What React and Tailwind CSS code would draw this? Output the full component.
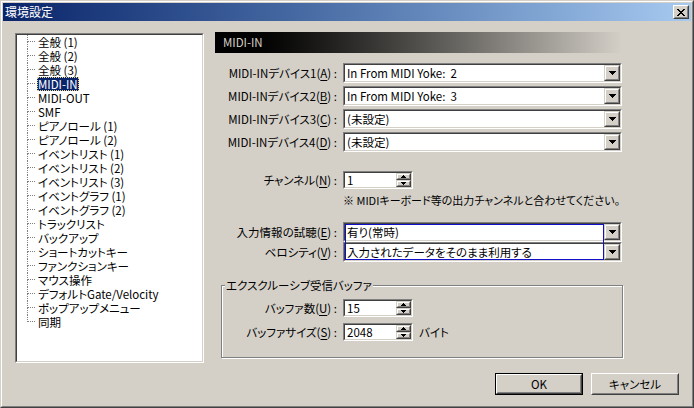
import React from 'react';

const FONT = "font-['Noto_Sans_CJK_JP','Noto_Sans_CJK_SC',sans-serif] [font-feature-settings:'palt']";

// classic 3D frames
const Raised = ({ children, className = '', button = false }) => (
    <div
        className={`border ${button
            ? 'border-t-white border-l-white'
            : 'border-t-[#d4d0c8] border-l-[#d4d0c8]'} border-b-[#404040] border-r-[#404040] ${className}`}
    >
        <div
            className={`flex h-full w-full items-center justify-center border ${button
                ? 'border-t-[#d4d0c8] border-l-[#d4d0c8]'
                : 'border-t-white border-l-white'} border-b-[#808080] border-r-[#808080] bg-[#d4d0c8]`}
        >
            {children}
        </div>
    </div>
);

const Sunken = ({ children, className = '' }) => (
    <div className={`border border-t-[#808080] border-l-[#808080] border-b-white border-r-white ${className}`}>
        <div className="flex h-full w-full border border-t-[#404040] border-l-[#404040] border-b-[#d4d0c8] border-r-[#d4d0c8] bg-white">
            {children}
        </div>
    </div>
);

const DownTri = () => (
    <svg width="7" height="4" viewBox="0 0 7 4" shapeRendering="crispEdges">
        <path d="M0 0h7v1h-1v1h-1v1h-1v1h-1v-1h-1v-1h-1v-1h-1z" fill="#000" />
    </svg>
);

const SmallTri = ({ up }) => (
    <svg width="5" height="3" viewBox="0 0 5 3" shapeRendering="crispEdges">
        {up
            ? <path d="M2 0h1v1h1v1h1v1h-5v-1h1v-1h1z" fill="#000" />
            : <path d="M0 0h5v1h-1v1h-1v1h-1v-1h-1v-1h-1z" fill="#000" />}
    </svg>
);

const Combo = ({ value }) => (
    <Sunken className="h-[20px] w-[279px]">
        <div className="flex-1 whitespace-pre pl-[2px] leading-[16px]">{value}</div>
        <Raised className="h-[16px] w-[16px]"><DownTri /></Raised>
    </Sunken>
);

const Spinner = ({ value }) => (
    <Sunken className="h-[18px] w-[70px]">
        <div className="flex-1 pl-[2px] leading-[14px]">{value}</div>
        <div className="flex w-[15px] flex-col">
            <Raised className="h-[7px] w-full"><SmallTri up /></Raised>
            <Raised className="h-[7px] w-full"><SmallTri /></Raised>
        </div>
    </Sunken>
);

const Label = ({ text, hot, width = 'w-[128px]' }) => (
    <div className={`${width} shrink-0 whitespace-nowrap pr-[6px] text-right leading-[14px]`}>
        {text}(<span className="underline underline-offset-2">{hot}</span>) :
    </div>
);

const TREE_ITEMS = [
    '全般 (1)', '全般 (2)', '全般 (3)', 'MIDI-IN', 'MIDI-OUT', 'SMF',
    'ピアノロール (1)', 'ピアノロール (2)',
    'イベントリスト (1)', 'イベントリスト (2)', 'イベントリスト (3)',
    'イベントグラフ (1)', 'イベントグラフ (2)',
    'トラックリスト', 'バックアップ', 'ショートカットキー', 'ファンクションキー',
    'マウス操作', 'デフォルトGate/Velocity', 'ポップアップメニュー', '同期'
];

const Tree = () => (
    <Sunken className="mt-px h-[330px] w-[189px] shrink-0">
        <div className="flex flex-col pl-[10px]">
            {TREE_ITEMS.map((item, idx) => {
                const last = idx === TREE_ITEMS.length - 1;
                const selected = item === 'MIDI-IN';
                return (
                    <div key={item} className="flex h-[14px] items-center">
                        <div className="flex h-[14px] w-[8px] shrink-0 flex-col">
                            <div className="h-[7px] border-b border-l border-dotted border-[#808080]" />
                            {!last && <div className="h-[7px] border-l border-dotted border-[#808080]" />}
                        </div>
                        <span
                            className={`ml-[2px] inline-block h-[14px] whitespace-nowrap border border-dotted leading-[12px] ${selected
                                ? 'border-[#e8d890] bg-[#0a246a] text-white'
                                : 'border-transparent'}`}
                        >
                            {item}
                        </span>
                    </div>
                );
            })}
        </div>
    </Sunken>
);

const MidiInPanel = () => (
    <div className="w-[408px]">
        <div className="h-[21px] w-[407px] bg-linear-to-r from-[#000000] to-[#d4d0c8] pl-[8px] leading-[21px] text-[#d4d0c8]">
            MIDI-IN
        </div>

        <div className="mt-[10px] flex flex-col gap-[3px]">
            {[
                ['1', 'A', 'In From MIDI Yoke:  2'],
                ['2', 'B', 'In From MIDI Yoke:  3'],
                ['3', 'C', '(未設定)'],
                ['4', 'D', '(未設定)']
            ].map(([n, hot, value]) => (
                <div key={n} className="flex items-center">
                    <Label text={`MIDI-INデバイス${n}`} hot={hot} />
                    <Combo value={value} />
                </div>
            ))}
        </div>

        <div className="mt-[19px] flex items-center">
            <Label text="チャンネル" hot="N" />
            <Spinner value="1" />
        </div>
        <div className="mt-[4px] whitespace-nowrap pl-[128px] text-[11px] leading-[14px]">
            ※ MIDIキーボード等の出力チャンネルと合わせてください。
        </div>

        <div className="relative mt-[15px] flex flex-col">
            <div className="flex items-center">
                <Label text="入力情報の試聴" hot="E" />
                <Combo value="有り(常時)" />
            </div>
            <div className="flex items-center">
                <Label text="ベロシティ" hot="V" />
                <Combo value="入力されたデータをそのまま利用する" />
            </div>
            {/* focus rectangle */}
            <div className="pointer-events-none absolute left-[130px] top-[2px] h-[36px] w-[259px] border border-[#1010c8]" />
        </div>

        <div className="relative ml-[6px] mt-[23px] w-[402px] border border-[#808080] pb-[16px] pt-[13px] shadow-[inset_1px_1px_0_#fff,1px_1px_0_#fff]">
            <span className="absolute -top-[8px] left-[3px] bg-[#d4d0c8] px-px leading-[14px]">
                エクスクルーシブ受信バッファ
            </span>
            <div className="flex flex-col gap-[6px]">
                <div className="flex items-center">
                    <Label text="バッファ数" hot="U" width="w-[121px]" />
                    <Spinner value="15" />
                </div>
                <div className="flex items-center">
                    <Label text="バッファサイズ" hot="S" width="w-[121px]" />
                    <Spinner value="2048" />
                    <span className="ml-[6px] leading-[14px]">バイト</span>
                </div>
            </div>
        </div>
    </div>
);

export default function App() {
    return (
        <div className={`${FONT} h-[408px] w-[694px] border border-b-[#404040] border-l-[#d4d0c8] border-r-[#404040] border-t-[#d4d0c8] text-[11.5px] text-black`}>
            <div className="flex h-full flex-col border border-b-[#808080] border-l-white border-r-[#808080] border-t-white bg-[#d4d0c8] p-px">
                {/* title bar */}
                <div className="flex h-[18px] shrink-0 items-center bg-linear-to-r from-[#0a246a] to-[#a6caf0] pl-[2px] pr-[2px]">
                    <span className="flex-1 text-[12px] leading-[18px] text-white">環境設定</span>
                    <Raised button className="h-[14px] w-[16px]">
                        <svg width="8" height="7" viewBox="0 0 8 7" shapeRendering="crispEdges">
                            <path d="M0 0h2v1h1v1h2v-1h1v-1h2v1h-1v1h-1v1h-1v1h1v1h1v1h1v1h-2v-1h-1v-1h-2v1h-1v1h-2v-1h1v-1h1v-1h1v-1h-1v-1h-1v-1h-1z" fill="#000" />
                        </svg>
                    </Raised>
                </div>

                {/* body */}
                <div className="flex flex-1 flex-col px-[12px] pt-[11px]">
                    <div className="flex h-[331px] items-start">
                        <Tree />
                        <div className="ml-[11px]">
                            <MidiInPanel />
                        </div>
                    </div>
                    <div className="mt-[10px] flex justify-end gap-[8px]">
                        <div className="h-[22px] w-[88px] border border-black">
                            <Raised button className="h-full w-full">
                                <span className="leading-[14px]">OK</span>
                            </Raised>
                        </div>
                        <Raised button className="h-[22px] w-[88px]">
                            <span className="leading-[14px]">キャンセル</span>
                        </Raised>
                    </div>
                </div>
            </div>
        </div>
    );
}
